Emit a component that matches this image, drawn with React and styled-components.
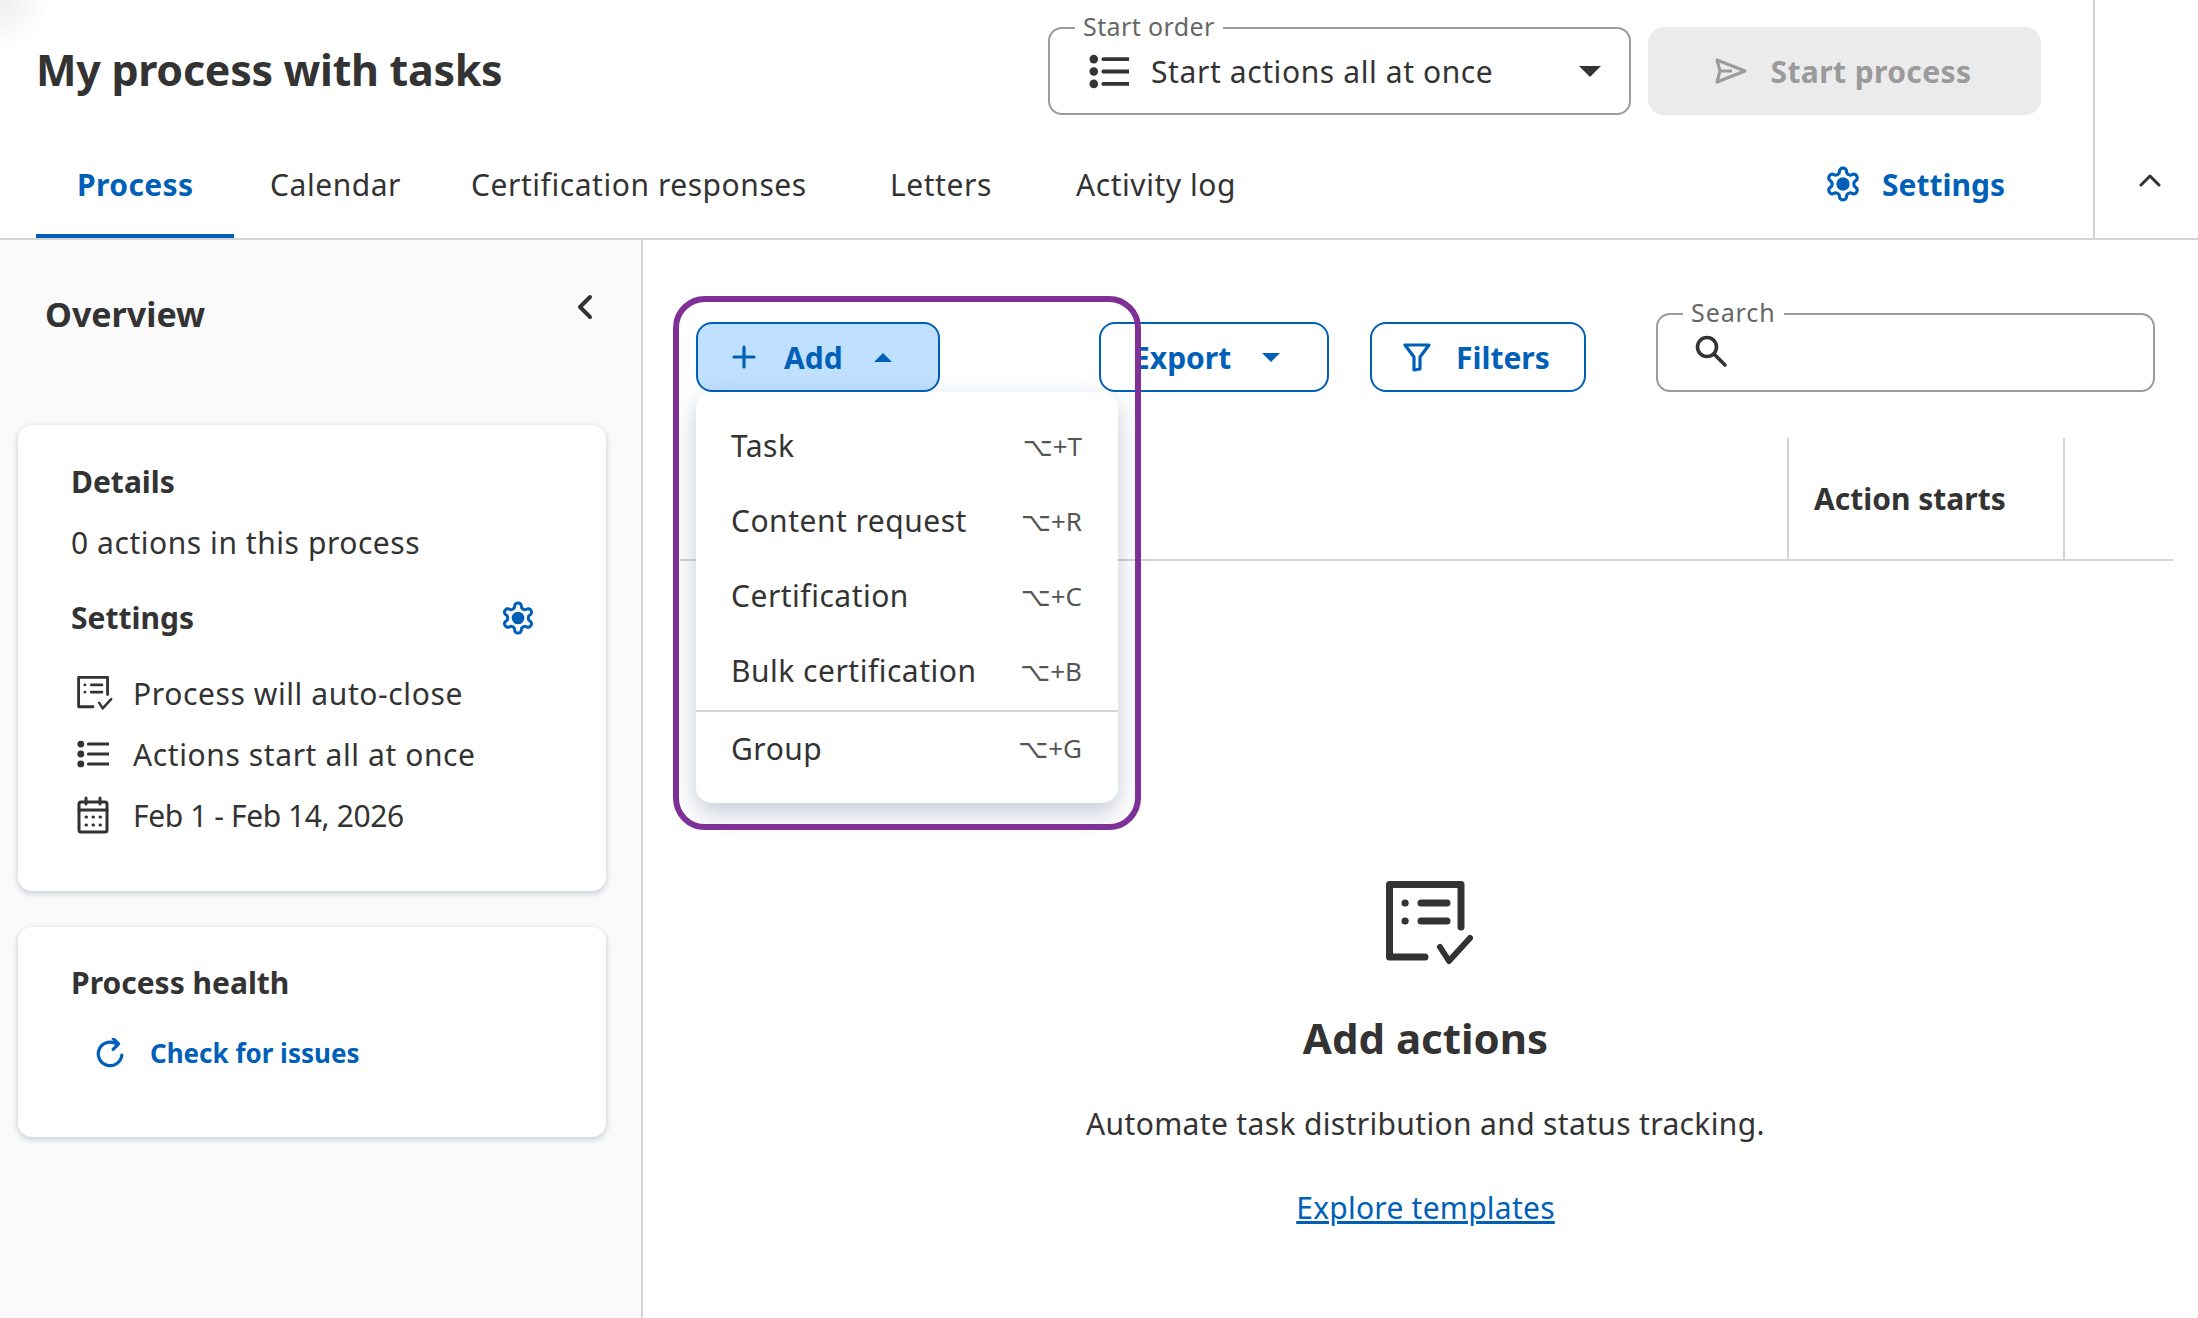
import React from "react";
import styled, { createGlobalStyle } from "styled-components";

const FONT = `"Noto Sans", "DejaVu Sans", sans-serif`;
const BLUE = "#0060b8";
const INK = "#333333";

const Global = createGlobalStyle`
  html, body { margin: 0; padding: 0; background: #fff; }
  body { font-family: ${FONT}; color: ${INK}; }
  * { box-sizing: border-box; }
`;

const Page = styled.div`
  width: 2198px;
  height: 1318px;
  overflow: hidden;
  display: flex;
  flex-direction: column;
  background: #fff;
`;

const Header = styled.header`
  display: flex;
  height: 240px;
  flex: none;
  border-bottom: 2px solid #d4d4d4;
  background: radial-gradient(circle at 0 0, #eeeeee 0, #ffffff 50px);
`;
const HeaderMain = styled.div`
  flex: 1;
  display: flex;
  flex-direction: column;
  min-width: 0;
`;
const TopRow = styled.div`
  display: flex;
  align-items: center;
  height: 88px;
  margin-top: 27px;
  padding: 0 52px 0 36px;
`;
const Title = styled.h1`
  margin: -4px auto 0 0;
  font-size: 43px;
  font-weight: 700;
  letter-spacing: -0.3px;
  white-space: nowrap;
`;
const Outlined = styled.div`
  position: relative;
  border: 2px solid #9c9c9c;
  border-radius: 14px;
  background: #fff;
`;
const FloatLabel = styled.span`
  position: absolute;
  top: -17px;
  left: 25px;
  padding: 0 8px;
  background: #fff;
  color: #666;
  font-size: 25px;
  line-height: 28px;
  letter-spacing: ${(p) => p.$ls || "0.4px"};
`;
const Select = styled(Outlined)`
  width: 583px;
  height: 88px;
  display: flex;
  align-items: center;
  padding: 0 28px 0 39px;
  font-size: 30px;
`;
const SelectText = styled.span`
  margin-left: 22px;
  flex: 1;
  white-space: nowrap;
  letter-spacing: 0.6px;
`;
const StartButton = styled.button`
  width: 393px;
  height: 88px;
  margin-left: 17px;
  padding: 0 3px 0 0;
  display: flex;
  align-items: center;
  justify-content: center;
  gap: 24px;
  border: 0;
  border-radius: 16px;
  background: #ebebeb;
  color: #9a9a9a;
  font: 700 30px ${FONT};
  letter-spacing: 0.4px;
`;
const TabRow = styled.nav`
  margin-top: auto;
  height: 106px;
  display: flex;
  padding: 0 88px 0 36px;
`;
const Tab = styled.a`
  width: ${(p) => p.$w}px;
  padding: 2px 0 0 ${(p) => (p.$active ? 41 : 36)}px;
  display: flex;
  align-items: center;
  height: 106px;
  font-size: 30px;
  white-space: nowrap;
  font-weight: ${(p) => (p.$active ? 700 : 400)};
  color: ${(p) => (p.$active ? BLUE : INK)};
  border-bottom: 4px solid ${(p) => (p.$active ? BLUE : "transparent")};
  letter-spacing: ${(p) => (p.$active ? "0.4px" : "0.55px")};
`;
const SettingsLink = styled.a`
  margin-left: auto;
  display: flex;
  align-items: center;
  gap: 20px;
  height: 102px;
  padding-top: 2px;
  color: ${BLUE};
  font-size: 30px;
  font-weight: 700;
`;
const CollapseCell = styled.div`
  width: 105px;
  flex: none;
  border-left: 2px solid #d4d4d4;
  padding: 173px 0 0 44px;
`;

const Body = styled.div`
  flex: 1;
  display: flex;
  min-height: 0;
`;
const Sidebar = styled.aside`
  width: 643px;
  flex: none;
  background: #fafafa;
  border-right: 2px solid #d4d4d4;
  padding: 54px 35px 0 18px;
`;
const SideHead = styled.div`
  display: flex;
  justify-content: space-between;
  align-items: flex-start;
  padding: 0 13px 0 27px;
  height: 40px;
  margin-bottom: 91px;
`;
const SideTitle = styled.h2`
  margin: 0;
  font-size: 34px;
  line-height: 40px;
  font-weight: 700;
`;
const Card = styled.section`
  background: #fff;
  border-radius: 14px;
  box-shadow: 0 2px 6px rgba(70, 90, 130, 0.32);
  padding: ${(p) => p.$pad};
  margin-bottom: 36px;
`;
const CardHead = styled.div`
  display: flex;
  align-items: center;
  justify-content: space-between;
  height: 36px;
  margin-top: ${(p) => p.$mt || 0}px;
  padding-right: 70px;
`;
const CardTitle = styled.h3`
  margin: 0;
  font-size: 30px;
  line-height: 36px;
  font-weight: 700;
`;
const CardText = styled.p`
  margin: 25px 0 0;
  font-size: 30px;
  line-height: 36px;
  letter-spacing: 0.55px;
`;
const InfoList = styled.div`
  display: flex;
  flex-direction: column;
  gap: 17px;
  margin-top: 35px;
`;
const InfoRow = styled.div`
  display: flex;
  align-items: center;
  height: 44px;
  gap: 24px;
  padding-left: 6px;
  font-size: 30px;
  letter-spacing: ${(p) => p.$ls || "0.6px"};
  white-space: nowrap;
`;
const InfoIcon = styled.span`
  width: 32px;
  flex: none;
  display: flex;
  align-items: center;
`;
const CheckLink = styled.a`
  display: flex;
  align-items: center;
  gap: 25px;
  height: 36px;
  margin: 34px 0 0 24px;
  color: ${BLUE};
  font-size: 26px;
  font-weight: 700;
`;

const Main = styled.main`
  flex: 1;
  min-width: 0;
  padding: 73px 0 0 37px;
`;
const Toolbar = styled.div`
  display: flex;
  align-items: flex-end;
  height: 79px;
  padding-left: 16px;
`;
const AddWrap = styled.div`
  position: relative;
  width: 244px;
  margin-right: 159px;
`;
const ToolButton = styled.button`
  display: flex;
  align-items: center;
  width: ${(p) => p.$w}px;
  height: 70px;
  margin-right: ${(p) => p.$mr || 0}px;
  padding: 0 0 0 ${(p) => p.$pl}px;
  gap: ${(p) => p.$gap}px;
  border: 2.5px solid ${BLUE};
  border-radius: 16px;
  background: ${(p) => (p.$open ? "#c0e0ff" : "#fff")};
  color: ${BLUE};
  font: 700 30px ${FONT};
`;
const CaretSlot = styled.span`
  margin-left: 3px;
  display: flex;
`;
const SearchBox = styled(Outlined)`
  width: 499px;
  height: 79px;
  padding: 19px 0 0 36px;
`;
const Menu = styled.div`
  position: absolute;
  top: 70px;
  left: 0;
  z-index: 2;
  width: 422px;
  height: 411px;
  background: #fff;
  border-radius: 16px;
  box-shadow: 0 10px 24px rgba(70, 90, 130, 0.32);
  padding-top: 16px;
`;
const MenuItem = styled.div`
  display: flex;
  align-items: center;
  justify-content: space-between;
  height: ${(p) => p.$h || 75}px;
  padding: 0 36px 0 35px;
  font-size: 30px;
  letter-spacing: 0.5px;
`;
const Shortcut = styled.span`
  font-size: 26px;
  letter-spacing: 0;
  color: #555;
`;
const MenuDivider = styled.hr`
  margin: 2px 0 0;
  border: 0;
  border-top: 2px solid #d4d4d4;
`;
const Highlight = styled.div`
  position: absolute;
  z-index: 3;
  top: -26px;
  left: -23px;
  width: 468px;
  height: 534px;
  border: 6px solid #7f3096;
  border-radius: 32px;
  pointer-events: none;
`;
const TableHead = styled.div`
  margin: 46px 25px 0 0;
  height: 123px;
  border-bottom: 2px solid #d4d4d4;
  display: flex;
  justify-content: flex-end;
  padding-right: 108px;
`;
const HeadCell = styled.div`
  width: 278px;
  border-left: 2px solid #d4d4d4;
  border-right: 2px solid #d4d4d4;
  padding-left: 25px;
  display: flex;
  align-items: center;
  font-size: 30px;
  font-weight: 700;
`;
const Empty = styled.div`
  display: flex;
  flex-direction: column;
  align-items: center;
  padding: 320px 27px 0 0;
`;
const EmptyIcon = styled.div`
  margin-left: 9px;
`;
const EmptyTitle = styled.h2`
  margin: 43px 0 0;
  font-size: 42px;
  line-height: 60px;
  font-weight: 700;
`;
const EmptyText = styled.p`
  margin: 33px 0 0;
  font-size: 30px;
  line-height: 46px;
  letter-spacing: 0.35px;
`;
const EmptyLink = styled.a`
  margin-top: 38px;
  font-size: 30px;
  line-height: 46px;
  letter-spacing: 0.25px;
  color: ${BLUE};
  text-decoration: underline;
`;

const IconBox = styled.svg`
  flex: none;
  display: block;
`;

const GEAR =
  "M12.22 2h-.44a2 2 0 0 0-2 2v.18a2 2 0 0 1-1 1.73l-.43.25a2 2 0 0 1-2 0l-.15-.08a2 2 0 0 0-2.73.73l-.22.38a2 2 0 0 0 .73 2.73l.15.1a2 2 0 0 1 1 1.72v.51a2 2 0 0 1-1 1.74l-.15.09a2 2 0 0 0-.73 2.73l.22.38a2 2 0 0 0 2.73.73l.15-.08a2 2 0 0 1 2 0l.43.25a2 2 0 0 1 1 1.73V20a2 2 0 0 0 2 2h.44a2 2 0 0 0 2-2v-.18a2 2 0 0 1 1-1.73l.43-.25a2 2 0 0 1 2 0l.15.08a2 2 0 0 0 2.73-.73l.22-.39a2 2 0 0 0-.73-2.73l-.15-.08a2 2 0 0 1-1-1.74v-.5a2 2 0 0 1 1-1.74l.15-.09a2 2 0 0 0 .73-2.73l-.22-.38a2 2 0 0 0-2.73-.73l-.15.08a2 2 0 0 1-2 0l-.43-.25a2 2 0 0 1-1-1.73V4a2 2 0 0 0-2-2z";

const Gear = ({ size = 38 }) => (
  <IconBox width={size} height={size} viewBox="0 0 24 24" fill="none" stroke={BLUE} strokeWidth="2">
    <path d={GEAR} />
    <circle cx="12" cy="12" r="4.2" fill={BLUE} stroke="none" />
  </IconBox>
);
const ListIcon = ({ w = 40, h = 35 }) => (
  <IconBox width={w} height={h} viewBox="0 0 42 36" fill={INK}>
    <circle cx="5" cy="5" r="4.5" />
    <circle cx="5" cy="18" r="4.5" />
    <circle cx="5" cy="31" r="4.5" />
    <path d="M15 5h27M15 18h27M15 31h27" stroke={INK} strokeWidth="4" strokeLinecap="round" fill="none" />
  </IconBox>
);
const ChecklistIcon = ({ w = 36, h = 34 }) => (
  <IconBox width={w} height={h} viewBox="0 0 88 84" fill="none" stroke={INK} strokeLinecap="round" strokeLinejoin="round">
    <path strokeWidth="7" d="M39 76H3.5V3.5H75V46" />
    <path strokeWidth="6" d="M54 66l9 14 21-23" />
    <path strokeWidth="7" d="M35 22h26M35 40h26" />
    <path strokeWidth="7" d="M19 22h.2M19 40h.2" />
  </IconBox>
);
const CalendarIcon = () => (
  <IconBox width="32" height="38" viewBox="0 0 32 38" fill="none" stroke={INK} strokeWidth="3" strokeLinejoin="round" strokeLinecap="round">
    <rect x="2" y="6" width="28" height="30" rx="2" />
    <path d="M2 14h28M9 2v6M23 2v6" />
    <path d="M9 21h.5M16 21h.5M23 21h.5M9 29h.5M16 29h.5M23 29h.5" />
  </IconBox>
);
const Caret = ({ up, color = INK, w = 22, h = 11 }) => (
  <IconBox width={w} height={h} viewBox="0 0 22 11" fill={color}>
    <path d={up ? "M11 0l11 11H0z" : "M0 0h22L11 11z"} />
  </IconBox>
);
const SendIcon = () => (
  <IconBox width="32" height="26" viewBox="0 0 32 26" fill="none" stroke="#9a9a9a" strokeWidth="3" strokeLinejoin="round">
    <path d="M2 2l28 11L2 24l3-11z" />
    <path d="M5 13h12" />
  </IconBox>
);
const ChevronUp = () => (
  <IconBox width="22" height="14" viewBox="0 0 22 14" fill="none" stroke={INK} strokeWidth="3" strokeLinecap="round" strokeLinejoin="round">
    <path d="M2 12l9-9 9 9" />
  </IconBox>
);
const ChevronLeft = () => (
  <IconBox width="16" height="26" viewBox="0 0 16 26" fill="none" stroke={INK} strokeWidth="4" strokeLinecap="round" strokeLinejoin="round">
    <path d="M13 3L3 13l10 10" />
  </IconBox>
);
const PlusIcon = () => (
  <IconBox width="24" height="24" viewBox="0 0 24 24" fill="none" stroke={BLUE} strokeWidth="3.2" strokeLinecap="round">
    <path d="M12 2v20M2 12h20" />
  </IconBox>
);
const FunnelIcon = () => (
  <IconBox width="28" height="30" viewBox="0 0 28 30" fill="none" stroke={BLUE} strokeWidth="3.2" strokeLinejoin="round" strokeLinecap="round">
    <path d="M2 3h24L17 15v12l-6 1V15z" />
  </IconBox>
);
const SearchIcon = () => (
  <IconBox width="34" height="34" viewBox="0 0 34 34" fill="none" stroke={INK} strokeWidth="3.6" strokeLinecap="round">
    <circle cx="13" cy="13" r="9.5" />
    <path d="M20 20l11 11" />
  </IconBox>
);
const RefreshIcon = () => (
  <IconBox width="30" height="30" viewBox="0 0 28 28" fill="none" stroke={BLUE} strokeWidth="3" strokeLinecap="round" strokeLinejoin="round">
    <path d="M25 16a11 11 0 1 1-6-11" />
    <path d="M17 0.5l5 5-5 5" />
  </IconBox>
);

const menu = [
  ["Task", "⌥+T"],
  ["Content request", "⌥+R"],
  ["Certification", "⌥+C"],
  ["Bulk certification", "⌥+B"],
];

export default function App() {
  return (
    <Page>
      <Global />
      <Header>
        <HeaderMain>
          <TopRow>
            <Title>My process with tasks</Title>
            <Select>
              <FloatLabel>Start order</FloatLabel>
              <ListIcon />
              <SelectText>Start actions all at once</SelectText>
              <Caret />
            </Select>
            <StartButton>
              <SendIcon />
              Start process
            </StartButton>
          </TopRow>
          <TabRow>
            <Tab $w={198} $active>Process</Tab>
            <Tab $w={201}>Calendar</Tab>
            <Tab $w={419}>Certification responses</Tab>
            <Tab $w={186}>Letters</Tab>
            <Tab $w={240}>Activity log</Tab>
            <SettingsLink>
              <Gear />
              Settings
            </SettingsLink>
          </TabRow>
        </HeaderMain>
        <CollapseCell>
          <ChevronUp />
        </CollapseCell>
      </Header>
      <Body>
        <Sidebar>
          <SideHead>
            <SideTitle>Overview</SideTitle>
            <ChevronLeft />
          </SideHead>
          <Card $pad="39px 0 54px 53px">
            <CardHead>
              <CardTitle>Details</CardTitle>
            </CardHead>
            <CardText>0 actions in this process</CardText>
            <CardHead $mt={39}>
              <CardTitle>Settings</CardTitle>
              <Gear size={36} />
            </CardHead>
            <InfoList>
              <InfoRow>
                <InfoIcon><ChecklistIcon /></InfoIcon>
                Process will auto-close
              </InfoRow>
              <InfoRow>
                <InfoIcon><ListIcon w={32} h={28} /></InfoIcon>
                Actions start all at once
              </InfoRow>
              <InfoRow $ls="-0.4px">
                <InfoIcon><CalendarIcon /></InfoIcon>
                Feb 1 - Feb 14, 2026
              </InfoRow>
            </InfoList>
          </Card>
          <Card $pad="38px 0 66px 53px">
            <CardHead>
              <CardTitle>Process health</CardTitle>
            </CardHead>
            <CheckLink>
              <RefreshIcon />
              Check for issues
            </CheckLink>
          </Card>
        </Sidebar>
        <Main>
          <Toolbar>
            <AddWrap>
              <ToolButton $open $w={244} $pl={34} $gap={28}>
                <PlusIcon />
                Add
                <CaretSlot>
                  <Caret up color={BLUE} w={18} h={9} />
                </CaretSlot>
              </ToolButton>
              <Menu>
                {menu.map(([label, key]) => (
                  <MenuItem key={label}>
                    {label}
                    <Shortcut>{key}</Shortcut>
                  </MenuItem>
                ))}
                <MenuDivider />
                <MenuItem $h={72}>
                  Group
                  <Shortcut>⌥+G</Shortcut>
                </MenuItem>
              </Menu>
              <Highlight />
            </AddWrap>
            <ToolButton $w={230} $pl={32} $gap={31} $mr={41}>
              Export
              <Caret color={BLUE} w={18} h={9} />
            </ToolButton>
            <ToolButton $w={216} $pl={31} $gap={25} $mr={70}>
              <FunnelIcon />
              Filters
            </ToolButton>
            <SearchBox>
              <FloatLabel $ls="0.9px">Search</FloatLabel>
              <SearchIcon />
            </SearchBox>
          </Toolbar>
          <TableHead>
            <HeadCell>Action starts</HeadCell>
          </TableHead>
          <Empty>
            <EmptyIcon>
              <ChecklistIcon w={88} h={84} />
            </EmptyIcon>
            <EmptyTitle>Add actions</EmptyTitle>
            <EmptyText>Automate task distribution and status tracking.</EmptyText>
            <EmptyLink>Explore templates</EmptyLink>
          </Empty>
        </Main>
      </Body>
    </Page>
  );
}
